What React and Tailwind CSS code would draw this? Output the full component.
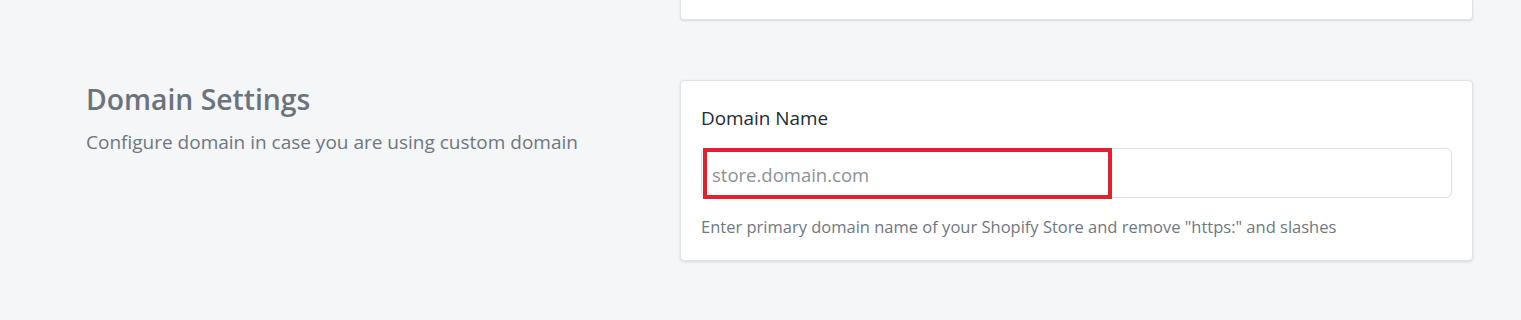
import React from 'react';

const font = { fontFamily: '"Open Sans", "Noto Sans", Arial, sans-serif' };

const App = () => {
  return (
    <div className="min-h-[320px] w-full bg-[#f4f6f8] pl-[86px] pr-[48px]" style={font}>
      {/* Previous section (cut off) */}
      <div className="flex">
        <div className="w-[594px] shrink-0"></div>
        <div className="h-[20px] flex-1 rounded-b-[4px] border border-t-0 border-[#dfe3e8] bg-white shadow-[0_1px_2px_rgba(0,0,0,0.12)]"></div>
      </div>

      {/* Domain Settings */}
      <div className="mt-[60px] flex">
        <div className="w-[594px] shrink-0 pt-[1px]">
          <h2 className="text-[28.3px] font-semibold leading-[36px] text-[#6b737b]">Domain Settings</h2>
          <p className="mt-[12px] text-[19px] leading-[26px] text-[#6f777f]">
            Configure domain in case you are using custom domain
          </p>
        </div>

        <div className="flex-1 rounded-[4px] border border-[#dfe3e8] bg-white px-[20px] pt-[24px] pb-[22px] shadow-[0_1px_3px_rgba(0,0,0,0.12)]">
          <label className="block text-[18.9px] leading-[26px] text-[#212b36]">Domain Name</label>
          <div className="relative mt-[17px]">
            <input
              type="text"
              placeholder="store.domain.com"
              className="block h-[50px] w-full rounded-[6px] border border-[#dcdfe3] bg-white px-[10px] pt-[3px] text-[18.5px] text-[#212b36] outline-none placeholder:text-[#8c9196]"
            />
            {/* Annotation highlight */}
            <div className="pointer-events-none absolute left-[2px] top-0 h-[51px] w-[409px] border-[4px] border-[#e3202e]"></div>
          </div>
          <p className="mt-[18px] text-[16.5px] leading-[22px] text-[#6f777f]">
            Enter primary domain name of your Shopify Store and remove "https:" and slashes
          </p>
        </div>
      </div>
    </div>
  );
};

export default App;
